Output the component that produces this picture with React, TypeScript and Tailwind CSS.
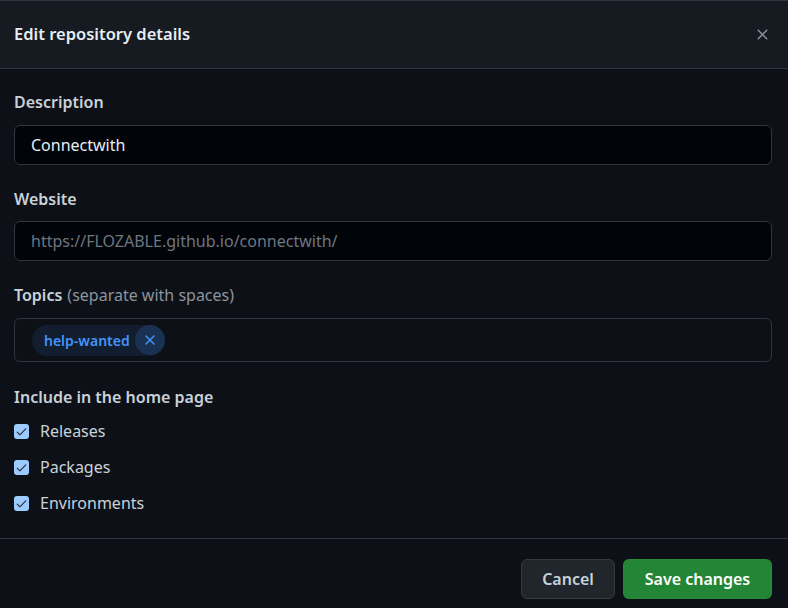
import { X } from "lucide-react";

const font = { fontFamily: '"Noto Sans", "Liberation Sans", sans-serif' };

function Field({ label, hint, children }: { label: string; hint?: string; children: React.ReactNode }) {
    return (
        <div className="flex flex-col">
            <div className="h-[22px] flex items-center text-[16px] font-semibold text-[#c9d1d9] mb-[12px]">
                {label}
                {hint && <span className="ml-[5px] font-normal text-[#8b949e]">{hint}</span>}
            </div>
            {children}
        </div>
    );
}

function Check({ label }: { label: string }) {
    return (
        <label className="flex items-center h-[36px] gap-[11px]">
            <span className="w-[15px] h-[15px] rounded-[3px] bg-[#9ecbff] flex items-center justify-center">
                <svg width="13" height="13" viewBox="0 0 16 16" fill="#2d333b">
                    <path d="M13.78 4.22a.75.75 0 0 1 0 1.06l-7.25 7.25a.75.75 0 0 1-1.06 0L2.22 9.28a.75.75 0 0 1 1.06-1.06L6 10.94l6.72-6.72a.75.75 0 0 1 1.06 0Z" />
                </svg>
            </span>
            <span className="text-[16px] text-[#c9d1d9]">{label}</span>
        </label>
    );
}

export default function App() {
    return (
        <div style={font} className="w-[788px] h-[608px] bg-[#0d1117] flex flex-col overflow-hidden">
            <div className="h-[69px] shrink-0 bg-[#161b22] border-t border-[#30363d] border-b flex items-center justify-between px-[14px]">
                <h1 className="text-[16.5px] font-semibold text-[#e6edf3]">Edit repository details</h1>
                <X className="w-[17px] h-[17px] text-[#8b949e] mr-[3px]" strokeWidth={2} />
            </div>
            <div className="flex flex-col gap-[23px] pl-[14px] pr-[16px] pt-[22px]">
                <Field label="Description">
                    <div className="h-[40px] rounded-[6px] border border-[#30363d] bg-[#010409] flex items-center px-[16px] text-[16px] text-[#e6edf3]">
                        Connectwith
                    </div>
                </Field>
                <Field label="Website">
                    <div className="h-[40px] -mt-[1px] rounded-[6px] border border-[#30363d] bg-[#010409] flex items-center px-[16px] text-[16px] text-[#6e7681]">
                        https://FLOZABLE.github.io/connectwith/
                    </div>
                </Field>
                <Field label="Topics" hint="(separate with spaces)">
                    <div className="h-[44px] rounded-[6px] border border-[#30363d] bg-[#0d1117] flex items-center px-[17px]">
                        <span className="h-[31px] rounded-full bg-[#121d2f] flex items-center pl-[12px] text-[14px] font-semibold text-[#4493f8]">
                            help-wanted
                            <span className="ml-[5px] w-[30px] h-[30px] rounded-full bg-[#1b3153] flex items-center justify-center">
                                <X className="w-[16px] h-[16px]" strokeWidth={2.2} />
                            </span>
                        </span>
                    </div>
                </Field>
            </div>
            <div className="px-[14px] pt-[24px] flex flex-col">
                <div className="h-[22px] flex items-center text-[16px] font-semibold text-[#c9d1d9] mb-[5px]">Include in the home page</div>
                <Check label="Releases" />
                <Check label="Packages" />
                <Check label="Environments" />
            </div>
            <div className="mt-[17px] border-t border-[#30363d] flex justify-end gap-[8px] px-[16px] pt-[20px]">
                <button className="h-[40px] w-[94px] rounded-[6px] border border-[#363b42] bg-[#21262d] text-[16px] font-semibold text-[#c9d1d9]">
                    Cancel
                </button>
                <button className="h-[40px] w-[149px] rounded-[6px] border border-[#2ea04326] bg-[#238636] text-[16px] font-semibold text-white">
                    Save changes
                </button>
            </div>
        </div>
    );
}
